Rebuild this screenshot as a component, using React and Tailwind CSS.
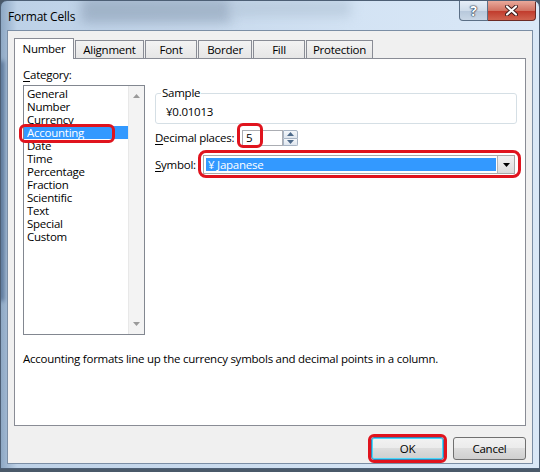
import React from 'react';

const categories = [
  'General',
  'Number',
  'Currency',
  'Accounting',
  'Date',
  'Time',
  'Percentage',
  'Fraction',
  'Scientific',
  'Text',
  'Special',
  'Custom',
];

const tabs = [
  { label: 'Number', w: 'w-[60px]', active: true },
  { label: 'Alignment', w: 'w-[69px]' },
  { label: 'Font', w: 'w-[52px]' },
  { label: 'Border', w: 'w-[54px]' },
  { label: 'Fill', w: 'w-[52px]' },
  { label: 'Protection', w: 'w-[67px]' },
];

function Arrow({ dir = 'down', color = '#9a9a9a' }) {
  return (
    <svg width="7" height="4" viewBox="0 0 7 4">
      {dir === 'down' ? (
        <path d="M0 0h7L3.5 4z" fill={color} />
      ) : (
        <path d="M0 4h7L3.5 0z" fill={color} />
      )}
    </svg>
  );
}

function Tab({ label, w, active }) {
  if (active) {
    return (
      <div
        className={`${w} h-[21px] -mb-px relative z-10 bg-white border border-b-0 border-[#898c95] flex items-center justify-center`}
      >
        {label}
      </div>
    );
  }
  return (
    <div
      className={`${w} h-[18px] bg-[linear-gradient(#f3f3f3,#e6e6e6)] border border-b-0 border-[#898c95] flex items-center justify-center`}
    >
      {label}
    </div>
  );
}

function Button({ children, focused }) {
  return (
    <div
      className={`w-[73px] h-[23px] rounded-[3px] border ${
        focused ? 'border-[#3c7fb1] shadow-[inset_0_0_0_1px_#48d8fb]' : 'border-[#707070]'
      } bg-[linear-gradient(#f2f2f2_0%,#ebebeb_50%,#dddddd_50%,#cfcfcf_100%)] flex items-center justify-center`}
    >
      {children}
    </div>
  );
}

export default function App() {
  return (
    <div className="relative w-[540px] h-[472px] overflow-hidden bg-[#4a5969] font-['Open_Sans',sans-serif] text-[11.5px] text-black leading-[14px] tracking-[-0.25px]">
      <div className="relative h-[469px] rounded-t-[7px] border border-[#4d5f75] bg-[linear-gradient(90deg,#8ea8c4_0%,#bdd1e7_3%,#c6d8ec_30%,#d3e3f4_65%,#dae8f7_100%)] flex flex-col overflow-hidden">
        {/* blurred desktop showing through the glass */}
        <div className="absolute left-[80px] top-[-4px] w-[150px] h-[26px] bg-[#8a9db3] opacity-60 blur-[6px]" />
        <div className="absolute left-[230px] top-[-2px] w-[120px] h-[18px] bg-[#a9bccf] opacity-50 blur-[6px]" />
        <div className="absolute left-[-2px] top-[60px] w-[5px] h-[240px] bg-[#3d5a80] opacity-70 blur-[2px]" />

        {/* title bar */}
        <div className="relative h-[29px] flex items-start justify-between pl-[7px] pr-[3px]">
          <div className="pt-[9px] text-[12px] tracking-[-0.2px] text-black">Format Cells</div>
          <div className="flex">
            <div className="w-[29px] h-[20px] rounded-bl-[4px] border border-t-0 border-[#5b6f86] bg-[linear-gradient(#e6eef7_0%,#cfdcea_50%,#b7c8db_51%,#c9d7e6_100%)] flex items-center justify-center">
              <span className="font-bold text-[14px] text-white [text-shadow:0_0_1px_#1f2f45,0_0_1px_#1f2f45,0_0_2px_#1f2f45]">?</span>
            </div>
            <div className="w-[48px] h-[20px] rounded-br-[4px] border border-t-0 border-l-0 border-[#6b2a25] bg-[linear-gradient(#e9a99b_0%,#d27363_50%,#c0392b_51%,#d0634f_100%)] flex items-center justify-center">
              <svg width="13" height="11" viewBox="0 0 13 11">
                <path d="M2 1.5l9 8M11 1.5l-9 8" stroke="#3a1a1a" strokeWidth="4" strokeLinecap="round" />
                <path d="M2 1.5l9 8M11 1.5l-9 8" stroke="#ffffff" strokeWidth="2.2" strokeLinecap="round" />
              </svg>
            </div>
          </div>
        </div>

        {/* client area */}
        <div className="relative mx-[6px] h-[434px] border border-[#7b8ea5] bg-[#f0f0f0] flex flex-col px-[6px] pt-[7px]">
          <div className="flex items-end gap-px h-[20px]">
            {tabs.map((t) => (
              <Tab key={t.label} {...t} />
            ))}
          </div>

          <div className="h-[368px] bg-white border border-[#898c95] pl-[8px] pt-[9px] pr-[7px]">
            <div className="flex">
              {/* category list */}
              <div className="w-[122px] flex flex-col">
                <div className="h-[14px] mb-[3px]">
                  <span className="underline underline-offset-2">C</span>ategory:
                </div>
                <div className="h-[250px] border border-[#828790] flex">
                  <div className="flex-1 pt-px">
                    {categories.map((c) => (
                      <div
                        key={c}
                        className={`h-[13px] leading-[13px] pl-[3px] ${
                          c === 'Accounting' ? 'bg-[#3399ff] text-white' : ''
                        }`}
                      >
                        {c}
                      </div>
                    ))}
                  </div>
                  <div className="w-[16px] border-l border-[#e8e8e8] bg-[#f3f3f3] flex flex-col items-center justify-between py-[8px]">
                    <Arrow dir="up" />
                    <Arrow dir="down" />
                  </div>
                </div>
              </div>

              {/* options */}
              <div className="ml-[10px] w-[362px] flex flex-col">
                <fieldset className="mt-[18px] border border-[#d5dfe5] rounded-[3px] px-[5px]">
                  <legend className="px-px leading-[14px]">Sample</legend>
                  <div className="pl-[5px] pt-[5px] pb-[4px] h-[23px]">¥0.01013</div>
                </fieldset>

                <div className="mt-[6px] h-[16px] flex items-center">
                  <div className="w-[87px]">
                    <span className="underline underline-offset-2">D</span>ecimal places:
                  </div>
                  <div className="w-[41px] h-[16px] border border-[#abadb3] bg-white pl-[3px] flex items-center">5</div>
                  <div className="w-[15px] h-[16px] flex flex-col">
                    <div className="flex-1 border border-[#a7b4c4] rounded-tr-[2px] bg-[linear-gradient(#f4f7fb,#dfe6ee)] flex items-center justify-center">
                      <Arrow dir="up" color="#4d6a8a" />
                    </div>
                    <div className="flex-1 border border-t-0 border-[#a7b4c4] rounded-br-[2px] bg-[linear-gradient(#f4f7fb,#dfe6ee)] flex items-center justify-center">
                      <Arrow dir="down" color="#4d6a8a" />
                    </div>
                  </div>
                </div>

                <div className="mt-[9px] h-[19px] flex items-center">
                  <div className="w-[48px]">
                    <span className="underline underline-offset-2">S</span>ymbol:
                  </div>
                  <div className="w-[312px] h-[19px] border border-[#a9a9a9] bg-white flex">
                    <div className="flex-1 m-[2px] mr-[1px] bg-[#3399ff] text-white pl-[2px] flex items-center">¥ Japanese</div>
                    <div className="w-[17px] border-l border-[#b5b5b5] bg-[linear-gradient(#f2f2f2,#dcdcdc)] flex items-center justify-center">
                      <Arrow dir="down" color="#000" />
                    </div>
                  </div>
                </div>
              </div>
            </div>

            <div className="mt-[17px]">
              Accounting formats line up the currency symbols and decimal points in a column.
            </div>
          </div>

          <div className="mt-[11px] flex justify-end gap-[9px]">
            <Button focused>OK</Button>
            <Button>Cancel</Button>
          </div>
        </div>
      </div>

      {/* red callouts */}
      <div className="absolute left-[19px] top-[124px] w-[96px] h-[19px] border-[3px] border-[#e0141e] rounded-[6px]" />
      <div className="absolute left-[237px] top-[123px] w-[26px] h-[25px] border-[3px] border-[#e0141e] rounded-[6px]" />
      <div className="absolute left-[198px] top-[150px] w-[323px] h-[28px] border-[3px] border-[#e0141e] rounded-[8px]" />
      <div className="absolute left-[368px] top-[434px] w-[79px] h-[29px] border-[3px] border-[#e0141e] rounded-[6px]" />
    </div>
  );
}
